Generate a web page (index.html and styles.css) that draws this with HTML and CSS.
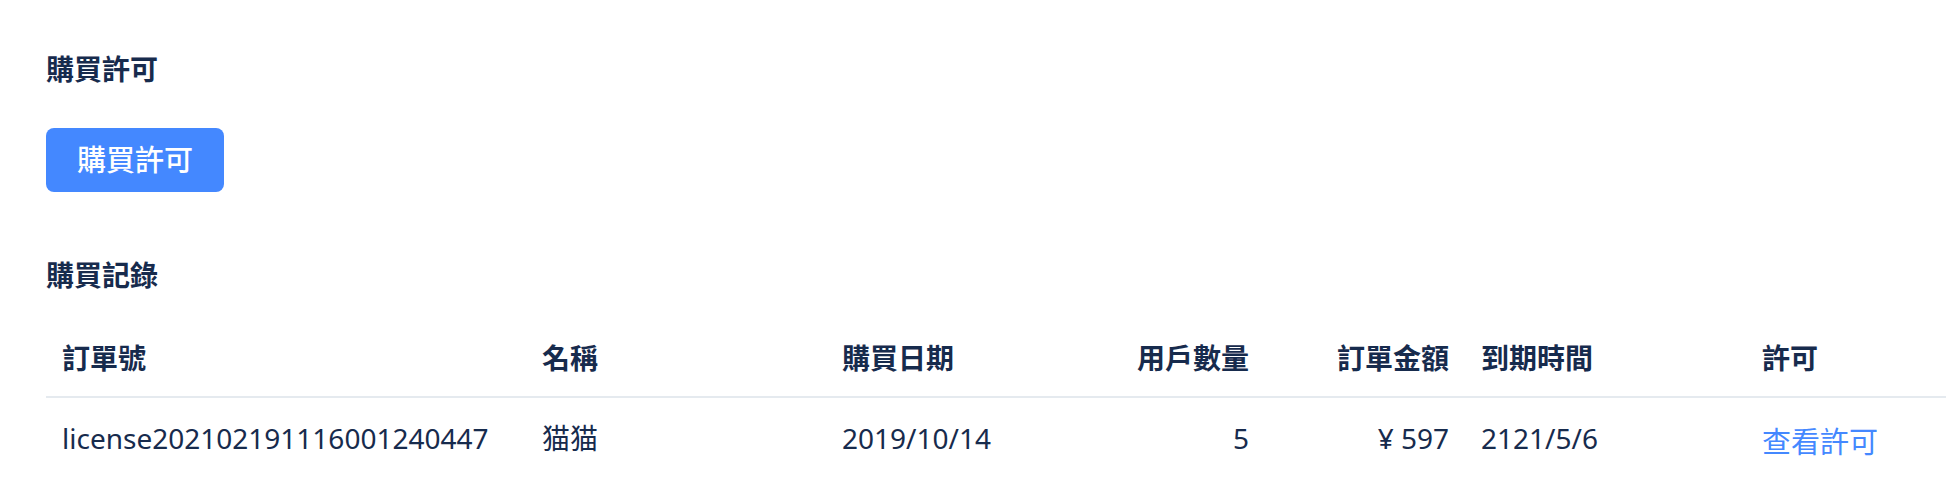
FILE: index.html
```html
<!DOCTYPE html>
<html lang="zh-Hant">
<head>
<meta charset="utf-8">
<title>購買許可</title>
<link rel="stylesheet" href="styles.css">
</head>
<body>
<main class="page">
  <section class="purchase">
    <h2 class="heading">購買許可</h2>
    <button class="button" type="button">購買許可</button>
  </section>
  <section class="records">
    <h2 class="heading">購買記錄</h2>
    <table class="table">
      <colgroup>
        <col class="col-order"><col class="col-name"><col class="col-date"><col class="col-users"><col class="col-amount"><col class="col-expiry"><col class="col-license">
      </colgroup>
      <thead>
        <tr><th>訂單號</th><th>名稱</th><th>購買日期</th><th class="number">用戶數量</th><th class="number">訂單金額</th><th>到期時間</th><th>許可</th></tr>
      </thead>
      <tbody>
        <tr><td>license202102191116001240447</td><td lang="zh-Hans">猫猫</td><td>2019/10/14</td><td class="number">5</td><td class="number">¥ 597</td><td>2121/5/6</td><td><a class="link" href="#license">查看許可</a></td></tr>
      </tbody>
    </table>
  </section>
</main>
</body>
</html>
```

FILE: styles.css
```css
* {
  box-sizing: border-box;
}

body {
  margin: 0;
  background: #fff;
  color: #172b4d;
  font: 28px/40px "Noto Sans", "Noto Sans CJK SC", sans-serif;
}

.page {
  padding: 49px 8px 0 46px;
}

.heading {
  margin: 0;
  font-size: 28px;
  line-height: 40px;
  font-weight: 600;
}

.button {
  display: block;
  height: 64px;
  margin-top: 39px;
  padding: 0 31px;
  border: 0;
  border-radius: 8px;
  background: #4488ff;
  color: #fff;
  font: inherit;
  font-size: 29px;
  font-weight: 500;
}

.records {
  margin-top: 63px;
}

.table {
  width: 100%;
  margin-top: 23px;
  border-collapse: collapse;
  table-layout: fixed;
}

.table th,
.table td {
  padding: 20px 16px;
  text-align: left;
  vertical-align: top;
  white-space: nowrap;
}

.table th {
  padding-bottom: 18px;
  border-bottom: 2px solid #e5eaef;
  font-weight: 600;
}

.table .number {
  text-align: right;
}

.col-order { width: 480px; }
.col-name { width: 300px; }
.col-date { width: 239px; }
.col-users { width: 200px; }
.col-amount { width: 200px; }
.col-expiry { width: 281px; }

.link {
  display: block;
  padding-top: 4px;
  color: #4488ff;
  font-size: 29px;
  text-decoration: none;
}
```
